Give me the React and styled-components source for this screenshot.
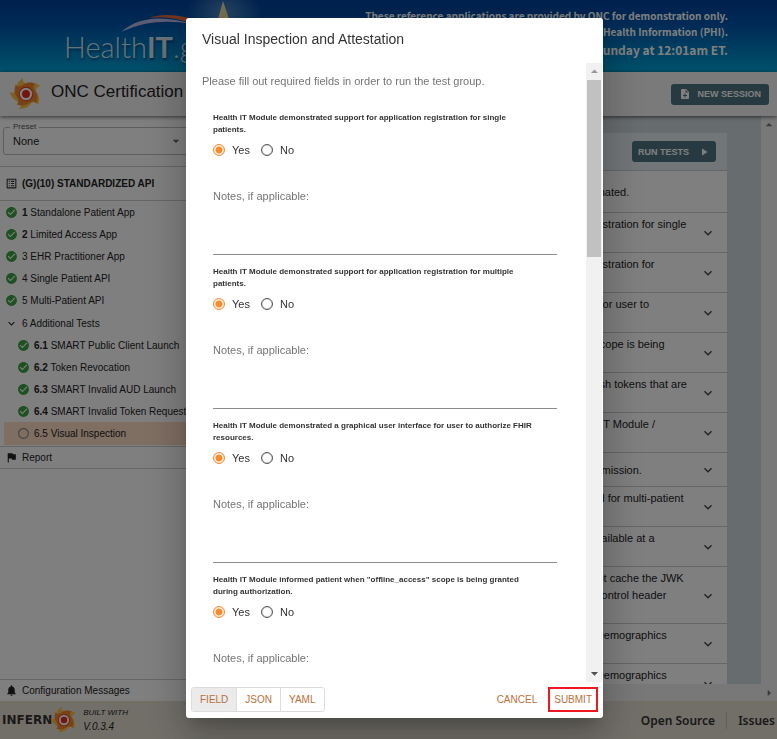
import React from "react";
import styled, { createGlobalStyle } from "styled-components";
import {
  MdCheckCircle,
  MdListAlt,
  MdFlag,
  MdNotifications,
  MdExpandMore,
  MdPlayArrow,
  MdNoteAdd,
  MdRadioButtonUnchecked,
  MdArrowDropDown,
  MdArrowDropUp,
  MdArrowRight,
} from "react-icons/md";

const GlobalStyle = createGlobalStyle`
  * { box-sizing: border-box; }
  body { margin: 0; font-family: "Liberation Sans", Arial, sans-serif; color: #222; }
  button, input, select, textarea { font-family: inherit; }
`;

const source = `"Noto Sans CJK SC", "Noto Sans", sans-serif`;

const Page = styled.div`
  display: flex;
  flex-direction: column;
  height: 100vh;
  overflow: hidden;
  background: #fff;
`;

/* Banner */
const Banner = styled.div`
  position: relative;
  flex: none;
  display: flex;
  justify-content: space-between;
  height: 72px;
  padding: 8px 49px 0 64px;
  background: linear-gradient(#00409c, #0056ac 35%, #00a4d8);
`;
const BannerStar = styled.svg`
  position: absolute;
  left: 112px;
  top: 0;
`;
const BannerLogo = styled.div`
  position: relative;
  padding-top: 19px;
  font: 300 29px/40px Lato, "Liberation Sans", sans-serif;
  color: #cfe6f2;
  text-shadow: 1px 2px 2px rgba(0, 30, 80, 0.5);
  white-space: nowrap;
  b { font-weight: 700; }
`;
const BannerNotice = styled.div`
  font: 700 10px/16px ${source};
  color: #fff;
  text-align: right;
  white-space: nowrap;
`;
const BannerAlert = styled.div`
  font-size: 12px;
  line-height: 20px;
`;

/* Header */
const Header = styled.header`
  position: relative;
  z-index: 1;
  flex: none;
  display: flex;
  align-items: center;
  height: 44px;
  padding: 0 8px 0 9px;
  gap: 8px;
  background: #f5f5f5;
  box-shadow: 0 1px 4px rgba(0, 0, 0, 0.6);
`;
const HeaderTitle = styled.h1`
  flex: 1;
  margin: 0;
  padding-bottom: 4px;
  font-size: 17px;
  line-height: 20px;
  font-weight: 400;
`;
const DarkButton = styled.button`
  display: flex;
  align-items: center;
  justify-content: center;
  gap: 6px;
  height: 21px;
  padding: 0 8px;
  border: 0;
  border-radius: 3px;
  background: #507583;
  color: #fff;
  font-size: 9px;
  font-weight: 700;
  white-space: nowrap;
  svg { font-size: 12px; }
`;

/* Body */
const Body = styled.div`
  flex: 1;
  display: flex;
  min-height: 0;
`;
const Sidebar = styled.aside`
  display: flex;
  flex-direction: column;
  width: 200px;
  border-right: 1px solid #ddd;
`;
const Preset = styled.fieldset`
  margin: 6px 4px 11px 3px;
  padding: 0;
  height: 33px;
  border: 1px solid #bdbdbd;
  border-radius: 3px;
`;
const PresetLegend = styled.legend`
  margin-left: 6px;
  padding: 0 3px;
  font-size: 8px;
  line-height: 10px;
  color: #555;
`;
const PresetField = styled.div`
  display: flex;
  align-items: center;
  padding-right: 10px;
  svg { font-size: 16px; color: #666; }
`;
const PresetSelect = styled.select`
  flex: 1;
  height: 18px;
  padding: 0 9px;
  border: 0;
  background: none;
  appearance: none;
  font-size: 11px;
  color: #222;
`;
const SuiteTitle = styled.div`
  display: flex;
  align-items: center;
  gap: 4px;
  height: 35px;
  padding-left: 5px;
  border: solid #ccc;
  border-width: 1px 0;
  font-size: 10px;
  font-weight: 700;
  svg { font-size: 13px; color: #333; }
`;
const NavList = styled.nav`
  display: flex;
  flex-direction: column;
  flex: 1;
`;
const NavItem = styled.a`
  display: flex;
  align-items: center;
  gap: 4px;
  height: ${(p) => (p.$selected || p.$ruled ? 23 : 22)}px;
  margin-left: ${(p) => (p.$nested ? 4 : 0)}px;
  padding-left: ${(p) => (p.$nested ? 13 : 5)}px;
  background: ${(p) => (p.$selected ? "#ffdcc4" : "none")};
  border: solid #ccc;
  border-width: ${(p) => (p.$ruled ? "1px 0" : 0)};
  color: #222;
  font-size: 10px;
  white-space: nowrap;
  text-decoration: none;
  svg {
    flex: none;
    font-size: 13px;
    color: ${(p) => (p.$state === "pass" ? "#3fa044" : p.$state === "idle" ? "#888" : "#222")};
  }
`;
const NavGroup = styled.div`
  padding: 1px 0;
`;
const Messages = styled(NavItem)`
  border-width: 1px 0 0;
`;

/* Main */
const Main = styled.main`
  flex: 1;
  display: grid;
  grid-template-columns: 1fr 16px;
  grid-template-rows: 1fr 17px;
  min-width: 0;
`;
const Canvas = styled.div`
  overflow: hidden;
  padding: 17px 34px 0 20px;
  background: #cfd8dc;
`;
const Track = styled.div`
  display: flex;
  align-items: ${(p) => (p.$end ? "center" : "flex-start")};
  justify-content: ${(p) => (p.$end ? "flex-end" : "center")};
  background: #f1f1f1;
  color: #777;
  svg { font-size: 18px; }
`;
const Card = styled.section`
  background: #fff;
`;
const CardHead = styled.div`
  display: flex;
  align-items: center;
  justify-content: flex-end;
  height: 38px;
  padding-right: 11px;
  background: #e6edf1;
  border-bottom: 1px solid #ccc;
`;
const RunButton = styled(DarkButton)`
  padding: 0 6px;
  gap: 9px;
`;
const TestRow = styled.div`
  display: flex;
  align-items: center;
  justify-content: space-between;
  min-height: 34px;
  padding: 3px 11px 2px 96px;
  border-bottom: 1px solid #ccc;
  font-size: 11px;
  line-height: 17px;
  white-space: nowrap;
  svg { flex: none; font-size: 16px; color: #444; }
`;
const Summary = styled(TestRow)`
  height: 42px;
  padding-left: 20px;
`;
const Line = styled.div``;

/* Footer */
const Footer = styled.footer`
  flex: none;
  display: flex;
  align-items: center;
  height: 38px;
  padding: 0 2px;
  background: #e5dfd3;
`;
const Wordmark = styled.span`
  font: 700 12px/20px "DejaVu Sans", sans-serif;
  color: #333;
`;
const FooterFlame = styled.span`
  display: flex;
  margin: 0 5px 0 -2px;
`;
const Built = styled.div`
  flex: 1;
  font-size: 8px;
  line-height: 14px;
  font-style: italic;
`;
const Version = styled.div`
  font-size: 10px;
`;
const FooterLink = styled.a`
  padding: 0 0 0 11px;
  margin-left: 11px;
  border-left: ${(p) => (p.$ruled ? "1px solid #c4beb2" : "0")};
  color: #333;
  font: 600 12px/17px "Noto Sans", sans-serif;
  text-decoration: none;
`;

/* Dialog */
const Backdrop = styled.div`
  position: fixed;
  inset: 0;
  z-index: 10;
  display: flex;
  padding: 18px 174px 21px 186px;
  background: rgba(0, 0, 0, 0.5);
`;
const Dialog = styled.div`
  flex: 1;
  display: flex;
  flex-direction: column;
  min-width: 0;
  border-radius: 3px;
  background: #fff;
  box-shadow: 0 11px 15px -7px rgba(0, 0, 0, 0.2), 0 24px 38px 3px rgba(0, 0, 0, 0.14),
    0 9px 46px 8px rgba(0, 0, 0, 0.12);
`;
const DialogTitle = styled.h2`
  margin: 0;
  padding: 11px 16px 14px;
  font-size: 14px;
  line-height: 20px;
  font-weight: 400;
  color: #333;
`;
const DialogBody = styled.div`
  flex: 1;
  display: flex;
  min-height: 0;
`;
const Form = styled.form`
  flex: 1;
  overflow: hidden;
  padding: 10px 29px 0 16px;
`;
const Intro = styled.p`
  margin: 0 0 23px;
  font-size: 11px;
  line-height: 16px;
  color: #757575;
`;
const Question = styled.fieldset`
  margin: 0 0 11px 11px;
  padding: 0;
  border: 0;
`;
const QuestionText = styled.legend`
  padding: 0 20px 0 0;
  font-size: 8px;
  line-height: 12px;
  font-weight: 700;
  color: #333;
`;
const Choices = styled.div`
  display: flex;
  gap: 11px;
  height: 24px;
  padding-top: 4px;
`;
const Choice = styled.label`
  display: flex;
  align-items: center;
  gap: 7px;
  font-size: 11px;
  color: #333;
`;
const Radio = styled.input`
  appearance: none;
  width: 12px;
  height: 12px;
  margin: 0;
  border: 1px solid #555;
  border-radius: 50%;
  box-shadow: inset 0 0 1px #555;
  &:checked {
    border-color: #f78b2d;
    box-shadow: inset 0 0 1px #f78b2d;
    background: radial-gradient(circle, #f78b2d 0 3px, transparent 4px);
  }
`;
const NotesLabel = styled.label`
  display: block;
  margin-top: 28px;
  font-size: 11px;
  line-height: 16px;
  color: #757575;
`;
const Notes = styled.textarea`
  display: block;
  width: 100%;
  height: 51px;
  padding: 0;
  border: 0;
  border-bottom: 1px solid #8c8c8c;
  outline: 0;
  resize: none;
  font-size: 11px;
`;
const DialogTrack = styled.div`
  flex: none;
  display: flex;
  flex-direction: column;
  align-items: center;
  justify-content: space-between;
  width: 16px;
  margin-right: 1px;
  background: #f1f1f1;
  svg { flex: none; font-size: 17px; }
`;
const ThumbArea = styled.div`
  flex: 1;
`;
const Thumb = styled.div`
  width: 14px;
  height: 177px;
  background: #c1c1c1;
`;
const Actions = styled.div`
  display: flex;
  align-items: center;
  height: 36px;
  padding: 0 5px 1px;
`;
const Toggles = styled.div`
  display: flex;
  margin-right: auto;
  border: 1px solid #dcdcdc;
  border-radius: 3px;
  overflow: hidden;
`;
const TextButton = styled.button`
  height: 23px;
  padding: 0 7px;
  border: ${(p) => (p.$framed ? "2px solid #f01820" : "0")};
  background: #fff;
  color: #b9713a;
  font-size: 10px;
`;
const Submit = styled(TextButton)`
  height: 25px;
  margin-left: 4px;
  padding: 0 4px;
`;
const Toggle = styled(TextButton)`
  padding: 0 8px;
  background: ${(p) => (p.$on ? "#ebebeb" : "#fff")};
  & + & { border-left: 1px solid #dcdcdc; }
`;

const Flame = ({ size }) => (
  <svg width={size} height={size} viewBox="0 0 100 100" aria-hidden="true">
    {[-14, 58, 130, 202, 274].map((a) => (
      <path key={a} transform={`rotate(${a} 50 50)`} fill="#fbc04a"
        d="M26 50C20 30 30 10 52 2C48 14 54 20 66 24C78 30 80 42 72 52L50 58Z" />
    ))}
    {[40, 130, 220, 310].map((a) => (
      <path key={a} transform={`rotate(${a} 50 50)`} fill="#f08428"
        d="M28 50C22 30 32 16 52 9C49 18 55 22 64 26C74 32 76 42 70 52L50 58Z" />
    ))}
    <circle cx="50" cy="50" r="21" fill="#e32a1c" />
    <circle cx="50" cy="50" r="15" fill="none" stroke="#fff" strokeWidth="7" />
  </svg>
);

const tests = [
  ["1", "Standalone Patient App", true],
  ["2", "Limited Access App", true],
  ["3", "EHR Practitioner App"],
  ["4", "Single Patient API"],
  ["5", "Multi-Patient API"],
];
const nested = [
  ["6.1", "SMART Public Client Launch"],
  ["6.2", "Token Revocation"],
  ["6.3", "SMART Invalid AUD Launch"],
  ["6.4", "SMART Invalid Token Request"],
];
const rows = [
  ["Health IT Module demonstrated support for application registration for single", "patients."],
  ["Health IT Module demonstrated support for application registration for", "multiple patients."],
  ["Health IT Module demonstrated a graphical user interface for user to", "authorize FHIR resources."],
  ["Health IT Module informed patient when \"offline_access\" scope is being", "granted during authorization."],
  ["Health IT Module attested that it is capable of issuing refresh tokens that are", "valid for three months."],
  ["Health IT developer demonstrated the ability of the Health IT Module /", "authorization server to validate tokens."],
  ["Tester verifies that all information is accurate and without omission."],
  ["Information returned no greater than scopes pre-authorized for multi-patient", "queries."],
  ["Health IT developer demonstrated the documentation is available at a", "publicly accessible URL."],
  ["Health IT developer confirms the Health IT Module does not cache the JWK", "Set received via a TLS-protected URL for longer than the control header", "received indicates."],
  ["Health IT developer demonstrates support for the Patient Demographics", "Suggested Resolution."],
  ["Health IT developer demonstrates support for the Patient Demographics", "Suggested Resolution."],
];
const questions = [
  "Health IT Module demonstrated support for application registration for single patients.",
  "Health IT Module demonstrated support for application registration for multiple patients.",
  "Health IT Module demonstrated a graphical user interface for user to authorize FHIR resources.",
  "Health IT Module informed patient when \"offline_access\" scope is being granted during authorization.",
];

export default function App() {
  return (
    <Page>
      <GlobalStyle />
      <Banner>
        <BannerStar width="150" height="72" viewBox="0 0 150 72" aria-hidden="true">
          <defs>
            <radialGradient id="glow">
              <stop offset="0" stopColor="#8fc4e8" stopOpacity=".55" />
              <stop offset="1" stopColor="#8fc4e8" stopOpacity="0" />
            </radialGradient>
          </defs>
          <ellipse cx="112" cy="14" rx="38" ry="34" fill="url(#glow)" />
          <path d="M111 1L117 19H106Z" fill="#f2dfa4" />
          <path d="M9 32C30 14 56 17 80 24C54 20 34 21 9 32Z" fill="#b9b9ea" />
          <path d="M37 18C50 13 66 15 80 19V24C66 18 52 16 37 18Z" fill="#e8663a" />
        </BannerStar>
        <BannerLogo>Health<b>IT</b>.gov</BannerLogo>
        <BannerNotice>
          <div>These reference applications are provided by ONC for demonstration only.</div>
          <div>Do not enter Protected Health Information (PHI).</div>
          <BannerAlert>Systems reset every Sunday at 12:01am ET.</BannerAlert>
        </BannerNotice>
      </Banner>
      <Header>
        <Flame size={34} />
        <HeaderTitle>ONC Certification</HeaderTitle>
        <DarkButton type="button"><MdNoteAdd />NEW SESSION</DarkButton>
      </Header>
      <Body>
        <Sidebar>
          <Preset>
            <PresetLegend><label htmlFor="preset">Preset</label></PresetLegend>
            <PresetField>
              <PresetSelect id="preset"><option>None</option></PresetSelect>
              <MdArrowDropDown />
            </PresetField>
          </Preset>
          <SuiteTitle><MdListAlt />(G)(10) STANDARDIZED API</SuiteTitle>
          <NavList>
            {tests.map(([n, t, bold]) => (
              <NavItem key={n} href="#" $state="pass">
                <MdCheckCircle /><span>{bold ? <b>{n}</b> : n} {t}</span>
              </NavItem>
            ))}
            <NavGroup>
              <NavItem href="#"><MdExpandMore /><span>6 Additional Tests</span></NavItem>
              {nested.map(([n, t]) => (
                <NavItem key={n} href="#" $nested $state="pass">
                  <MdCheckCircle /><span><b>{n}</b> {t}</span>
                </NavItem>
              ))}
              <NavItem href="#" $nested $selected $state="idle">
                <MdRadioButtonUnchecked /><span>6.5 Visual Inspection</span>
              </NavItem>
            </NavGroup>
            <NavItem href="#" $ruled><MdFlag /><span>Report</span></NavItem>
          </NavList>
          <Messages href="#"><MdNotifications /><span>Configuration Messages</span></Messages>
        </Sidebar>
        <Main>
          <Canvas>
            <Card>
              <CardHead>
                <RunButton type="button">RUN TESTS<MdPlayArrow /></RunButton>
              </CardHead>
              <Summary>Visual inspection or attestation is required for criteria that can not be automated.</Summary>
              {rows.map((lines, i) => (
                <TestRow key={i}>
                  <div>{lines.map((l) => <Line key={l}>{l}</Line>)}</div>
                  <MdExpandMore />
                </TestRow>
              ))}
            </Card>
          </Canvas>
          <Track><MdArrowDropUp /></Track>
          <Track />
          <Track $end><MdArrowRight /></Track>
        </Main>
      </Body>
      <Footer>
        <Wordmark>INFERN</Wordmark>
        <FooterFlame><Flame size={28} /></FooterFlame>
        <Built>BUILT WITH<Version>V.0.3.4</Version></Built>
        <FooterLink href="#">Open Source</FooterLink>
        <FooterLink href="#" $ruled>Issues</FooterLink>
      </Footer>
      <Backdrop>
        <Dialog role="dialog" aria-labelledby="dialog-title">
          <DialogTitle id="dialog-title">Visual Inspection and Attestation</DialogTitle>
          <DialogBody>
            <Form id="inputs">
              <Intro>Please fill out required fields in order to run the test group.</Intro>
              {questions.map((q, i) => (
                <Question key={q}>
                  <QuestionText>{q}</QuestionText>
                  <Choices>
                    <Choice><Radio type="radio" name={`q${i}`} defaultChecked />Yes</Choice>
                    <Choice><Radio type="radio" name={`q${i}`} />No</Choice>
                  </Choices>
                  <NotesLabel htmlFor={`notes${i}`}>Notes, if applicable:</NotesLabel>
                  <Notes id={`notes${i}`} />
                </Question>
              ))}
            </Form>
            <DialogTrack>
              <MdArrowDropUp color="#999" />
              <ThumbArea><Thumb /></ThumbArea>
              <MdArrowDropDown color="#505050" />
            </DialogTrack>
          </DialogBody>
          <Actions>
            <Toggles>
              <Toggle type="button" $on>FIELD</Toggle>
              <Toggle type="button">JSON</Toggle>
              <Toggle type="button">YAML</Toggle>
            </Toggles>
            <TextButton type="button">CANCEL</TextButton>
            <Submit type="submit" form="inputs" $framed>SUBMIT</Submit>
          </Actions>
        </Dialog>
      </Backdrop>
    </Page>
  );
}
